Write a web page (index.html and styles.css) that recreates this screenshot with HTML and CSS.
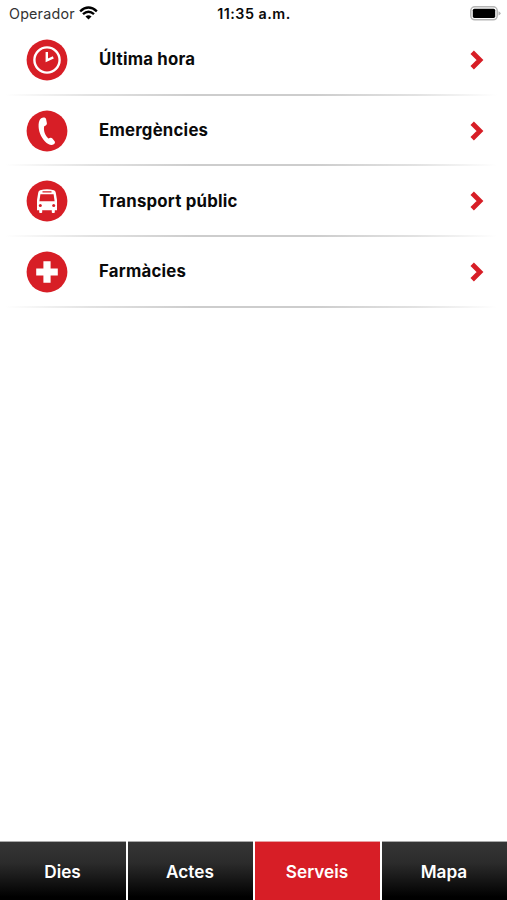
FILE: index.html
```html
<!DOCTYPE html>
<html lang="ca">
<head>
  <meta charset="UTF-8" />
  <title>Serveis</title>
  <meta name="viewport" content="width=device-width, initial-scale=1.0" />
  <link rel="stylesheet" href="styles.css">
</head>
<body>

  <header class="status-bar">
    <div class="carrier">
      <span>Operador</span>
      <svg class="wifi" viewBox="0 0 20 14">
        <path d="M1.2 5.2Q10 -2.8 18.8 5.2" />
        <path d="M4.2 8.3Q10 3 15.8 8.3" />
        <path class="dot" d="M6.8 10.7Q10 8 13.2 10.7L10 13.9Z" />
      </svg>
    </div>
    <div class="time">11:35 a.m.</div>
    <svg class="battery" viewBox="0 0 31 15">
      <rect x="0.8" y="0.8" width="26.4" height="13" rx="4" fill="#fff" stroke="#b5b5b5" stroke-width="1.5" />
      <rect x="2.8" y="2.7" width="22.4" height="9.2" rx="1.6" />
      <path d="M28.5 5.2Q30.6 6 30.6 7.3T28.5 9.4Z" fill="#b5b5b5" />
    </svg>
  </header>

  <main class="services">
    <a class="service">
      <svg class="icon" viewBox="0 0 42 42">
        <circle class="disc" cx="21" cy="21" r="20.4" />
        <circle cx="21" cy="21" r="12.6" fill="none" stroke="#fff" stroke-width="2.4" />
        <path d="M20.8 13V21.3L27.3 18.4" fill="none" stroke="#fff" stroke-width="2.4" />
      </svg>
      <span class="label">Última hora</span>
      <svg class="arrow" viewBox="0 0 14 20"><path d="M2.2 2.2L10 10L2.2 17.8" /></svg>
    </a>
    <a class="service">
      <svg class="icon" viewBox="0 0 42 42">
        <circle class="disc" cx="21" cy="21" r="20.4" />
        <path class="glyph" d="M15.2 8.2C17 7 19.2 7.2 20 8.8L20.9 13.2C21 14.8 20 15.4 18.2 16.2C17.2 20.5 19.2 25.5 22.4 28.5C24 27.6 25.4 27.3 26.4 28.4L28.8 31.5C29.5 33.2 28.2 34.7 25.8 34.9C21.5 35.1 16.3 29.6 14 23.4C11.9 17.4 12 10.6 15.2 8.2Z" />
      </svg>
      <span class="label">Emergències</span>
      <svg class="arrow" viewBox="0 0 14 20"><path d="M2.2 2.2L10 10L2.2 17.8" /></svg>
    </a>
    <a class="service">
      <svg class="icon" viewBox="0 0 42 42">
        <circle class="disc" cx="21" cy="21" r="20.4" />
        <path class="glyph" d="M14 10.2Q21 8.2 28 10.2Q29.6 10.8 29.8 12.8L31 20V30.2H28.8V32.2Q28.8 33 28 33H26.6Q25.8 33 25.8 32.2V30.2H16.2V32.2Q16.2 33 15.4 33H14Q13.2 33 13.2 32.2V30.2H11V20L12.2 12.8Q12.4 10.8 14 10.2Z" />
        <path class="disc" d="M16.5 11.3H25.5V12.4H16.5ZM14.4 14.2H27.6L28.6 21.2H13.4Z" />
        <circle class="disc" cx="14.3" cy="25.6" r="1.5" />
        <circle class="disc" cx="27.7" cy="25.6" r="1.5" />
      </svg>
      <span class="label">Transport públic</span>
      <svg class="arrow" viewBox="0 0 14 20"><path d="M2.2 2.2L10 10L2.2 17.8" /></svg>
    </a>
    <a class="service">
      <svg class="icon" viewBox="0 0 42 42">
        <circle class="disc" cx="21" cy="21" r="20.4" />
        <path class="glyph" d="M17.4 10.2H24.6V17.4H31.8V24.6H24.6V31.8H17.4V24.6H10.2V17.4H17.4Z" />
      </svg>
      <span class="label">Farmàcies</span>
      <svg class="arrow" viewBox="0 0 14 20"><path d="M2.2 2.2L10 10L2.2 17.8" /></svg>
    </a>
  </main>

  <nav class="tabs">
    <a class="tab">Dies</a>
    <a class="tab">Actes</a>
    <a class="tab active">Serveis</a>
    <a class="tab">Mapa</a>
  </nav>

</body>
</html>
```
FILE: styles.css
```css
body {
  margin: 0;
  height: 100vh;
  display: flex;
  flex-direction: column;
  font-family: Inter, "Liberation Sans", sans-serif;
  background: #fff;
  color: #0a0a0a;
  overflow: hidden;
}

.status-bar {
  display: grid;
  grid-template-columns: 1fr auto 1fr;
  align-items: center;
  height: 25px;
  padding: 1px 6px 0 9px;
  box-sizing: border-box;
  font-size: 14.3px;
}

.carrier {
  display: flex;
  align-items: center;
  gap: 4px;
  color: #333;
  letter-spacing: 0.2px;
}

.wifi {
  width: 19px;
  height: 14px;
  fill: none;
  stroke: #000;
  stroke-width: 2.5;
}

.wifi .dot {
  fill: #000;
  stroke: none;
}

.time {
  margin-right: 2px;
  font-weight: 600;
  letter-spacing: 0.5px;
}

.battery {
  justify-self: end;
  width: 31px;
  height: 15px;
}

.services {
  flex: 1;
}

.service {
  display: flex;
  align-items: center;
  height: 70.7px;
  padding: 0 23.5px 1px 26px;
  box-sizing: border-box;
  background: linear-gradient(to right, #fff 1%, #e2e2e2 18%, #cdcdcd 38%, #cdcdcd 62%, #e2e2e2 82%, #fff 98%) bottom / 100% 2px no-repeat;
}

.icon {
  width: 42px;
  height: 42px;
}

.disc {
  fill: #d71e26;
}

.glyph {
  fill: #fff;
}

.label {
  flex: 1;
  margin-left: 31px;
  padding-bottom: 1px;
  font-size: 16.8px;
  font-weight: 700;
  letter-spacing: 0.22px;
}

.arrow {
  width: 14px;
  height: 20px;
  fill: none;
  stroke: #d71e26;
  stroke-width: 4.8;
}

.tabs {
  display: grid;
  grid-template-columns: 126px repeat(3, 1fr);
  gap: 2px;
  height: 59px;
}

.tab {
  display: flex;
  align-items: center;
  justify-content: center;
  padding-right: 1px;
  border-top: 1px solid #aaa;
  background: linear-gradient(#353535, #2c2c2c 35%, #000 95%);
  color: #fff;
  font-size: 17.2px;
  font-weight: 600;
}

.tab.active {
  border-top-color: #e8a0a3;
  background: #d71e26;
}
```
